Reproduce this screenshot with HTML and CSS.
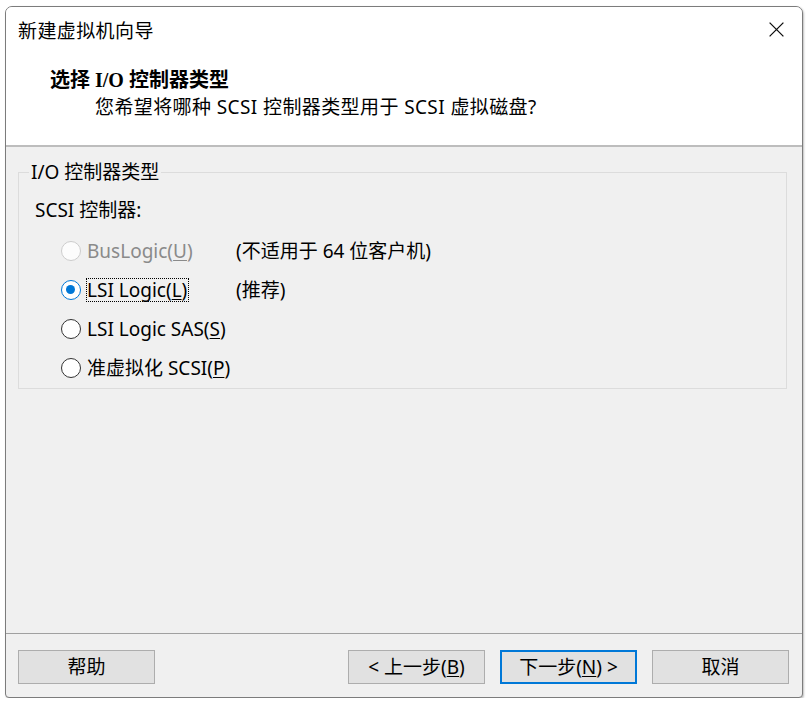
FILE: index.html
```html
<!DOCTYPE html>
<html lang="zh-CN">
<head>
<meta charset="utf-8">
<title>新建虚拟机向导</title>
<link rel="stylesheet" href="styles.css">
</head>
<body>
<div class="window">
  <div class="titlebar">
    <span class="title">新建虚拟机向导</span>
    <svg class="close" width="15" height="15" viewBox="0 0 15 15"><path d="M0.6 0.6 L14.4 14.4 M14.4 0.6 L0.6 14.4" stroke="#111" stroke-width="1.3" fill="none"/></svg>
  </div>
  <div class="header">
    <div class="heading">选择 I/O 控制器类型</div>
    <div class="subtitle">您希望将哪种 SCSI 控制器类型用于 SCSI 虚拟磁盘?</div>
  </div>
  <div class="content">
    <fieldset class="group">
      <legend>I/O 控制器类型</legend>
      <div class="label">SCSI 控制器:</div>
      <div class="options">
        <div class="option disabled">
          <span class="radio"></span>
          <span class="opt-label">BusLogic(<u>U</u>)</span>
          <span class="note">(不适用于 64 位客户机)</span>
        </div>
        <div class="option">
          <span class="radio checked"></span>
          <span class="opt-label"><span class="focus">LSI Logic(<u>L</u>)</span></span>
          <span class="note">(推荐)</span>
        </div>
        <div class="option">
          <span class="radio"></span>
          <span class="opt-label">LSI Logic SAS(<u>S</u>)</span>
        </div>
        <div class="option">
          <span class="radio"></span>
          <span class="opt-label">准虚拟化 SCSI(<u>P</u>)</span>
        </div>
      </div>
    </fieldset>
  </div>
  <div class="footer">
    <button class="btn">帮助</button>
    <button class="btn back">&lt; 上一步(<u>B</u>)</button>
    <button class="btn default">下一步(<u>N</u>) &gt;</button>
    <button class="btn">取消</button>
  </div>
</div>
</body>
</html>
```
FILE: styles.css
```css
html, body {
  margin: 0;
  background: #ffffff;
}
body {
  font-family: "Noto Sans", "Noto Sans CJK SC", sans-serif;
  font-size: 19px;
  color: #000;
}
.window {
  margin: 6px 0 0 5px;
  width: 798px;
  height: 692px;
  box-sizing: border-box;
  border: 1px solid #7c7c7c;
  border-radius: 7px 7px 4px 4px;
  background: #f0f0f0;
  display: flex;
  flex-direction: column;
  overflow: hidden;
  box-shadow: 1px 1px 2px rgba(0, 0, 0, 0.25);
}
.titlebar {
  height: 47px;
  flex: none;
  background: #fff;
  display: flex;
  align-items: center;
  justify-content: space-between;
  padding: 0 18px 0 12px;
}
.title {
  line-height: 24px;
  letter-spacing: 0.4px;
}
.close {
  display: block;
  margin-top: -3px;
}
.header {
  flex: none;
  height: 91px;
  background: #fff;
  border-bottom: 2px solid #bdbdbd;
  padding-left: 44px;
}
.heading {
  margin-top: 14px;
  line-height: 24px;
  font-family: "Liberation Serif", "Noto Sans CJK SC", serif;
  font-weight: bold;
  font-size: 20px;
}
.subtitle {
  margin-top: 3px;
  padding-left: 45px;
  line-height: 24px;
  letter-spacing: 0.4px;
}
.content {
  flex: 1;
  padding: 13px 15px 0 12px;
}
.group {
  margin: 0;
  padding: 14px 0 1px 0;
  border: 1px solid #dcdcdc;
  min-width: 0;
}
.group legend {
  margin-left: 10px;
  padding: 0 2px;
  line-height: 24px;
}
.label {
  margin-left: 16px;
  line-height: 24px;
}
.options {
  margin-top: 9px;
  margin-left: 16px;
}
.option {
  height: 39px;
  display: flex;
  align-items: center;
  line-height: 24px;
}
.radio {
  flex: none;
  width: 20px;
  height: 20px;
  box-sizing: border-box;
  margin-left: 26px;
  margin-right: 6px;
  border: 1px solid #333;
  border-radius: 50%;
  background: #fff;
  position: relative;
}
.radio.checked {
  border: 1.5px solid #0078d7;
}
.radio.checked::after {
  content: "";
  position: absolute;
  left: 4px;
  top: 4px;
  width: 9px;
  height: 9px;
  border-radius: 50%;
  background: #0078d7;
}
.option.disabled {
  color: #8a8a8a;
}
.option.disabled .radio {
  border-color: #cccccc;
  background: #fcfcfc;
}
.option.disabled .note {
  color: #000;
}
.opt-label {
  flex: none;
  width: 149px;
  white-space: nowrap;
}
.focus {
  display: inline-block;
  margin-left: -1px;
  padding-right: 1px;
  border: 1px dotted #000;
  line-height: 22px;
}
.note {
  white-space: nowrap;
}
u {
  text-underline-offset: 2px;
}
.footer {
  flex: none;
  height: 64px;
  box-sizing: border-box;
  border-top: 1px solid #a0a0a0;
  display: flex;
  align-items: flex-start;
  gap: 15px;
  padding: 16px 13px 0 12px;
}
.btn {
  width: 137px;
  height: 34px;
  box-sizing: border-box;
  border: 1px solid #adadad;
  background: #e1e1e1;
  font-family: "Noto Sans", "Noto Sans CJK SC", sans-serif;
  font-size: 19px;
  color: #000;
  padding: 0;
  line-height: 24px;
}
.btn.back {
  margin-left: auto;
}
.btn.default {
  border: 2px solid #0078d7;
}
```
